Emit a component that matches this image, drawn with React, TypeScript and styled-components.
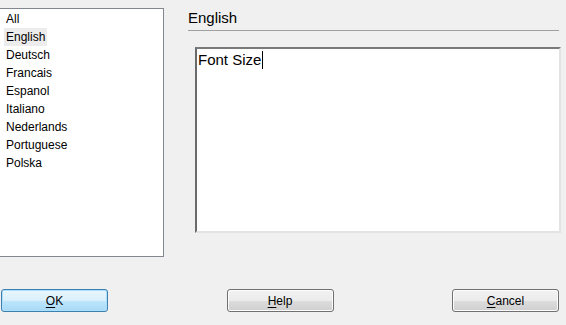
import React from 'react';
import styled, { createGlobalStyle } from 'styled-components';

const GlobalStyle = createGlobalStyle`
  html, body {
    margin: 0;
    padding: 0;
    background: #f0f0f0;
  }
  body {
    font-family: 'Liberation Sans', Arial, sans-serif;
    color: #000;
  }
`;

const Dialog = styled.div`
  width: 566px;
  height: 325px;
  display: flex;
  flex-direction: column;
  box-sizing: border-box;
  padding-top: 8px;
  overflow: hidden;
`;

const Main = styled.div`
  display: flex;
  align-items: flex-start;
`;

const ListBox = styled.ul`
  list-style: none;
  margin: 0;
  padding: 1px 0 0;
  width: 163px;
  height: 246px;
  background: #fff;
  border: 1px solid #828790;
  border-left: none;
`;

const ListItem = styled.li<{ $selected?: boolean }>`
  display: table;
  margin-left: 4px;
  padding: 0 2px;
  height: 18px;
  line-height: 18px;
  font-size: 12px;
  background: ${p => (p.$selected ? '#ececec' : 'transparent')};
`;

const Panel = styled.div`
  margin-left: 24px;
  width: 373px;
  display: flex;
  flex-direction: column;
`;

const Heading = styled.div`
  width: 371px;
  height: 22px;
  font-size: 15px;
  line-height: 20px;
  border-bottom: 1px solid #a0a0a0;
`;

const Editor = styled.div`
  margin: 16px 0 0 7px;
  width: 366px;
  height: 186px;
  box-sizing: border-box;
  background: #fff;
  border-style: solid;
  border-width: 2px;
  border-color: #7a7a7a #e3e3e3 #e3e3e3 #6a6a6a;
  padding: 2px 1px;
  font-size: 15px;
  line-height: 18px;
`;

const Caret = styled.span`
  display: inline-block;
  width: 1px;
  height: 18px;
  margin-left: 1px;
  vertical-align: -4px;
  background: #000;
`;

const ButtonRow = styled.div`
  display: flex;
  justify-content: space-between;
  margin-top: 32px;
  padding: 0 7px 0 1px;
`;

const Button = styled.button<{ $default?: boolean }>`
  width: 107px;
  height: 23px;
  box-sizing: border-box;
  border-radius: 3px;
  font-family: 'Liberation Sans', Arial, sans-serif;
  font-size: 12px;
  color: #000;
  padding: 0;
  border: 1px solid ${p => (p.$default ? '#3c7fb1' : '#707070')};
  background: ${p =>
    p.$default
      ? 'linear-gradient(#eaf6fd 0%, #d9f0fc 50%, #bee6fd 51%, #a7d9f5 100%)'
      : 'linear-gradient(#f2f2f2 0%, #ebebeb 50%, #dddddd 51%, #cfcfcf 100%)'};
  box-shadow: inset 0 0 0 1px ${p => (p.$default ? '#aee0fb' : '#fcfcfc')};
  u {
    text-underline-offset: 2px;
  }
`;

const languages = ['All', 'English', 'Deutsch', 'Francais', 'Espanol', 'Italiano', 'Nederlands', 'Portuguese', 'Polska'];

export default function App() {
  return (
    <Dialog>
      <GlobalStyle />
      <Main>
        <ListBox>
          {languages.map(lang => (
            <ListItem key={lang} $selected={lang === 'English'}>
              {lang}
            </ListItem>
          ))}
        </ListBox>
        <Panel>
          <Heading>English</Heading>
          <Editor>
            Font Size
            <Caret />
          </Editor>
        </Panel>
      </Main>
      <ButtonRow>
        <Button $default>
          <u>O</u>K
        </Button>
        <Button>
          <u>H</u>elp
        </Button>
        <Button>
          <u>C</u>ancel
        </Button>
      </ButtonRow>
    </Dialog>
  );
}
